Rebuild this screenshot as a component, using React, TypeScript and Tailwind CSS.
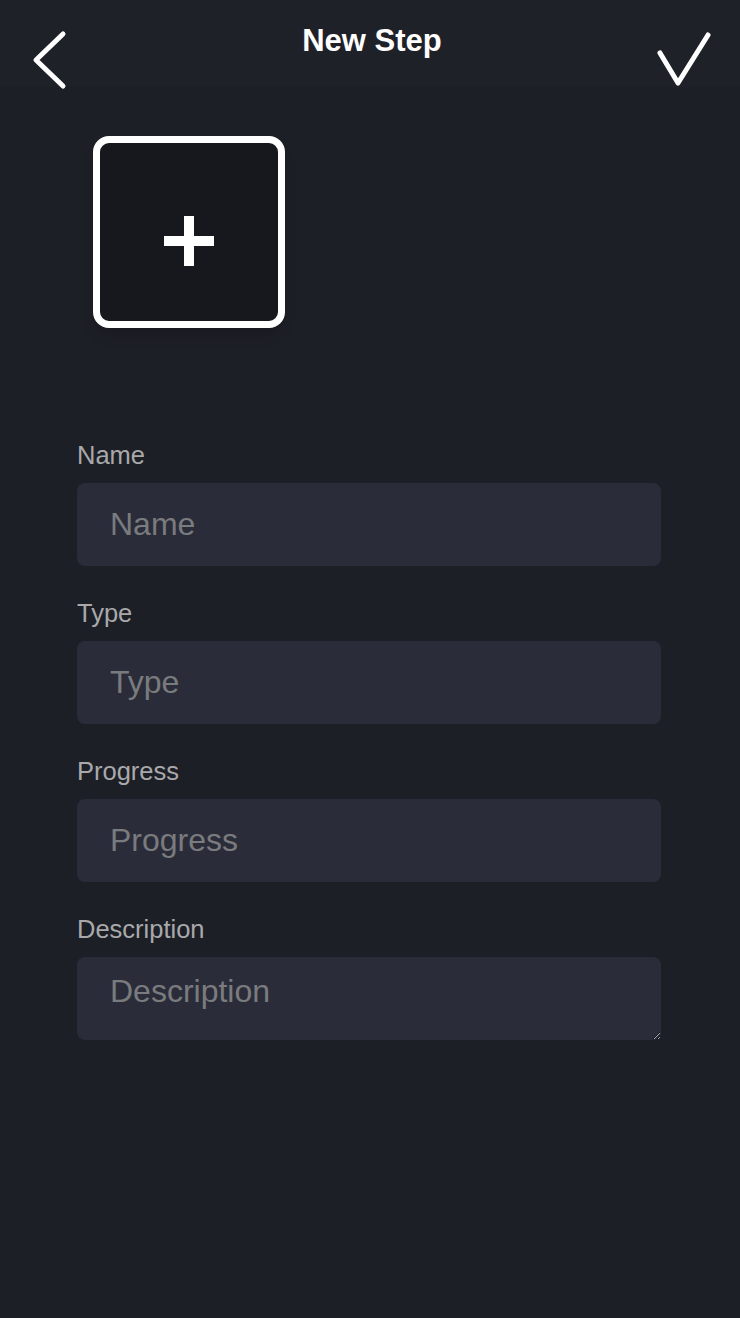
import { useState } from "react";

const fields = [
  { key: "name", label: "Name" },
  { key: "type", label: "Type" },
  { key: "progress", label: "Progress" },
];

export default function App() {
  const [values, setValues] = useState<Record<string, string>>({});

  return (
    <main className="min-h-[1318px] bg-[#1d1f26] font-['Liberation_Sans',Arial,sans-serif] text-white">
      {/* Header */}
      <header className="grid h-[87px] grid-cols-[1fr_auto_1fr] items-start bg-[#1f2129] pl-[28px] pr-[24px]">
        <button className="mt-[28px] h-[64px] justify-self-start cursor-pointer">
          <svg width="44" height="64" viewBox="0 0 44 64" fill="none">
            <path d="M35 6 L8 32 L35 58" stroke="white" strokeWidth="5" strokeLinecap="round" strokeLinejoin="round" />
          </svg>
        </button>
        <h1 className="pt-[23px] text-[31px] leading-[36px] font-bold">New Step</h1>
        <button className="mt-[28px] h-[64px] justify-self-end cursor-pointer">
          <svg width="64" height="64" viewBox="0 0 64 64" fill="none">
            <path d="M8 25 L26 55 L56 7" stroke="white" strokeWidth="5" strokeLinecap="round" strokeLinejoin="round" />
          </svg>
        </button>
      </header>

      <div className="pl-[77px] pr-[79px]">
        {/* Image picker */}
        <button className="mt-[49px] ml-[16px] flex h-[192px] w-[192px] items-center justify-center rounded-[16px] border-[7px] border-white bg-[#17181d] pt-[18px] shadow-lg cursor-pointer">
          <svg width="50" height="50" viewBox="0 0 50 50">
            <rect x="20" y="0" width="10" height="50" fill="white" />
            <rect x="0" y="20" width="50" height="10" fill="white" />
          </svg>
        </button>

        {/* Form */}
        <form className="mt-[113px] flex flex-col gap-[33px]">
          {fields.map((f) => (
            <label key={f.key} className="flex flex-col">
              <span className="mb-[14px] text-[25.5px] leading-[28px] text-[#a9a9ab]">{f.label}</span>
              <input
                value={values[f.key] ?? ""}
                onChange={(e) => setValues({ ...values, [f.key]: e.target.value })}
                placeholder={f.label}
                className="h-[83px] w-full rounded-[8px] bg-[#2a2d39] pl-[33px] text-[32px] text-white outline-none placeholder:text-[#7a7b7e]"
              />
            </label>
          ))}
          <label className="flex flex-col">
            <span className="mb-[14px] text-[25.5px] leading-[28px] text-[#a9a9ab]">Description</span>
            <textarea
              value={values.description ?? ""}
              onChange={(e) => setValues({ ...values, description: e.target.value })}
              placeholder="Description"
              className="h-[83px] w-full rounded-[8px] bg-[#2a2d39] pl-[33px] pt-[16px] text-[32px] leading-[36px] text-white outline-none placeholder:text-[#7a7b7e]"
            />
          </label>
        </form>
      </div>
    </main>
  );
}
